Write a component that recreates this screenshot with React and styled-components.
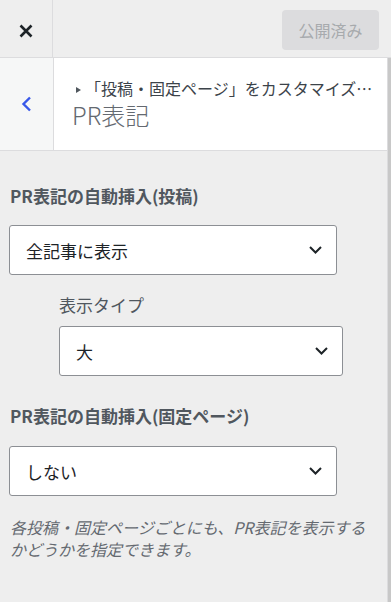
import styled, { createGlobalStyle } from "styled-components";

const GlobalStyle = createGlobalStyle`
  html, body {
    margin: 0;
    padding: 0;
    background: #eeeeee;
  }
  body {
    font-family: "Noto Sans CJK JP", "Noto Sans", sans-serif;
    color: #1d2327;
  }
`;

const Page = styled.div`
  width: 391px;
  height: 602px;
  display: flex;
  flex-direction: column;
  overflow: hidden;
`;

const TopBar = styled.div`
  height: 57px;
  flex-shrink: 0;
  display: flex;
  align-items: center;
  background: #eeeeee;
  border-bottom: 1px solid #dcdcde;
`;

const CloseButton = styled.div`
  width: 53px;
  height: 100%;
  display: flex;
  align-items: center;
  justify-content: center;
  padding-top: 4px;
  box-sizing: border-box;
  border-right: 1px solid #dcdcde;
`;

const PublishButton = styled.div`
  margin-left: auto;
  margin-right: 12px;
  margin-top: 3px;
  width: 97px;
  height: 40px;
  border-radius: 4px;
  background: #dcdcde;
  color: #a7aaad;
  font-size: 16px;
  display: flex;
  align-items: center;
  justify-content: center;
`;

const Frame = styled.div`
  flex: 1;
  display: flex;
`;

const Panel = styled.div`
  width: 387px;
  border-right: 1px solid #dcdcde;
  display: flex;
  flex-direction: column;
`;

const Scrollbar = styled.div`
  width: 3px;
  background: #c8c8c8;
`;

const Header = styled.div`
  height: 92px;
  display: flex;
  background: #ffffff;
  border-bottom: 1px solid #dcdcde;
`;

const BackButton = styled.div`
  width: 53px;
  flex-shrink: 0;
  background: #f6f7f7;
  border-right: 1px solid #dcdcde;
  display: flex;
  align-items: center;
  justify-content: center;
`;

const TitleBlock = styled.div`
  flex: 1;
  min-width: 0;
  padding: 0 14px 0 18px;
  display: flex;
  flex-direction: column;
  justify-content: center;
`;

const Crumb = styled.div`
  font-size: 16px;
  line-height: 22px;
  color: #3c434a;
  white-space: nowrap;
  overflow: hidden;
`;

const Arrow = styled.span`
  display: inline-block;
  width: 0;
  height: 0;
  margin: 0 4px 2px 4px;
  border-top: 3px solid transparent;
  border-bottom: 3px solid transparent;
  border-left: 5px solid #50575e;
  vertical-align: middle;
`;

const Title = styled.div`
  font-size: 24px;
  line-height: 32px;
  font-weight: 300;
  color: #646970;
`;

const Body = styled.div`
  flex: 1;
  padding: 33px 0 0 9px;
  display: flex;
  flex-direction: column;
`;

const Label = styled.div`
  font-size: 17px;
  line-height: 24px;
  font-weight: ${(p) => (p.$sub ? 400 : 700)};
  color: #50575e;
  margin-left: ${(p) => (p.$sub ? "50px" : "1px")};
  margin-top: ${(p) => p.$top || 0}px;
`;

const Select = styled.div`
  box-sizing: border-box;
  width: ${(p) => p.$width}px;
  height: 50px;
  margin-left: ${(p) => p.$indent || 0}px;
  margin-top: ${(p) => p.$top}px;
  background: #ffffff;
  border: 1px solid #8c8f94;
  border-radius: 3px;
  padding: 0 14px 0 16px;
  display: flex;
  align-items: center;
  justify-content: space-between;
  font-size: 17px;
  color: #1d2327;
`;

const Description = styled.p`
  margin: 20px 0 0 1px;
  width: 370px;
  font-size: 16px;
  line-height: 22px;
  font-style: italic;
  color: #646970;
`;

const Chevron = () => (
  <svg width="13" height="8" viewBox="0 0 13 8">
    <path d="M1 1 L6.5 6.5 L12 1" fill="none" stroke="#1d2327" strokeWidth="2" />
  </svg>
);

const App = () => {
  return (
    <Page>
      <GlobalStyle />
      <TopBar>
        <CloseButton>
          <svg width="14" height="14" viewBox="0 0 14 14">
            <path
              d="M1.5 1.5 L12.5 12.5 M12.5 1.5 L1.5 12.5"
              stroke="#1d2327"
              strokeWidth="2.6"
            />
          </svg>
        </CloseButton>
        <PublishButton>公開済み</PublishButton>
      </TopBar>
      <Frame>
        <Panel>
          <Header>
            <BackButton>
              <svg width="11" height="16" viewBox="0 0 11 16">
                <path
                  d="M9 1.5 L2.5 8 L9 14.5"
                  fill="none"
                  stroke="#3858e9"
                  strokeWidth="2.4"
                />
              </svg>
            </BackButton>
            <TitleBlock>
              <Crumb>
                <Arrow />「投稿・固定ページ」をカスタマイズ…
              </Crumb>
              <Title>PR表記</Title>
            </TitleBlock>
          </Header>
          <Body>
            <Label>PR表記の自動挿入(投稿)</Label>
            <Select $width={328} $top={17}>
              <span>全記事に表示</span>
              <Chevron />
            </Select>
            <Label $sub $top={18}>表示タイプ</Label>
            <Select $width={284} $indent={50} $top={9}>
              <span>大</span>
              <Chevron />
            </Select>
            <Label $top={28}>PR表記の自動挿入(固定ページ)</Label>
            <Select $width={328} $top={18}>
              <span>しない</span>
              <Chevron />
            </Select>
            <Description>
              各投稿・固定ページごとにも、PR表記を表示するかどうかを指定できます。
            </Description>
          </Body>
        </Panel>
        <Scrollbar />
      </Frame>
    </Page>
  );
};

export default App;
